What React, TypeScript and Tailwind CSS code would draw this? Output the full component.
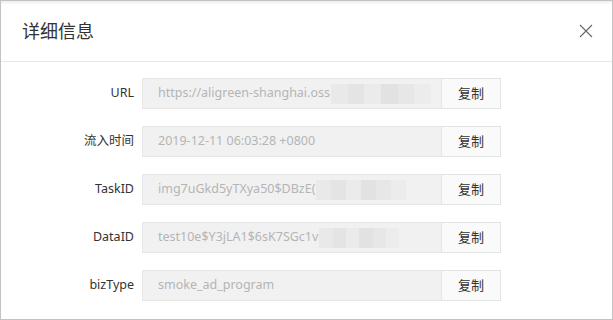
const rows: { label: string; value: string; mosaic?: number }[] = [
	{ label: 'URL', value: 'https://aligreen-shanghai.oss', mosaic: 100 },
	{ label: '流入时间', value: '2019-12-11 06:03:28 +0800' },
	{ label: 'TaskID', value: 'img7uGkd5yTXya50$DBzE(', mosaic: 90 },
	{ label: 'DataID', value: 'test10e$Y3jLA1$6sK7SGc1v', mosaic: 80 },
	{ label: 'bizType', value: 'smoke_ad_program' },
];

const Mosaic = ({ width }: { readonly width: number }) => (
	<span className="ml-[1px] inline-flex h-[20px] shrink-0 items-stretch" style={{ width }}>
		<span className="flex-1 bg-[#e9e9e9]" />
		<span className="flex-1 bg-[#e4e4e4]" />
		<span className="flex-1 bg-[#ebebeb]" />
		<span className="flex-1 bg-[#e2e2e2]" />
		<span className="flex-1 bg-[#e7e7e7]" />
		<span className="flex-1 bg-[#ececec]" />
	</span>
);

export default function App() {
	return (
		<div
			className="flex h-[320px] w-[613px] flex-col border border-[#c2c2c2] bg-white text-[#333]"
			style={{ fontFamily: '"Noto Sans", "Noto Sans CJK SC", sans-serif' }}
		>
			<div className="flex h-[61px] shrink-0 items-center justify-between border-b border-[#e8e8e8] pr-[19px] pl-[21px] shadow-[inset_0_4px_3px_-2px_#eeeeee]">
				<h2 className="text-[18px] font-normal text-[#333]">详细信息</h2>
				<svg width="14" height="14" viewBox="0 0 14 14">
					<path d="M1 1 L13 13 M13 1 L1 13" stroke="#666" strokeWidth="1.1" fill="none" />
				</svg>
			</div>
			<div className="flex flex-col gap-[17px] pt-[16px]">
				{rows.map((row) => (
					<div key={row.label} className="flex h-[31px] items-center">
						<label className="w-[141px] shrink-0 pr-[8px] text-right text-[12.5px]">{row.label}</label>
						<div className="flex h-[31px] w-[300px] shrink-0 items-center overflow-hidden border border-[#e6e6e6] bg-[#f1f1f1] pl-[15px] text-[12.5px] whitespace-nowrap text-[#b5b5b5]">
							<span>{row.value}</span>
							{row.mosaic ? <Mosaic width={row.mosaic} /> : null}
						</div>
						<button className="flex h-[31px] w-[59px] shrink-0 items-center justify-center border border-l-0 border-[#e3e3e3] bg-[#fafafa] text-[13px] text-[#333]">
							复制
						</button>
					</div>
				))}
			</div>
		</div>
	);
}
